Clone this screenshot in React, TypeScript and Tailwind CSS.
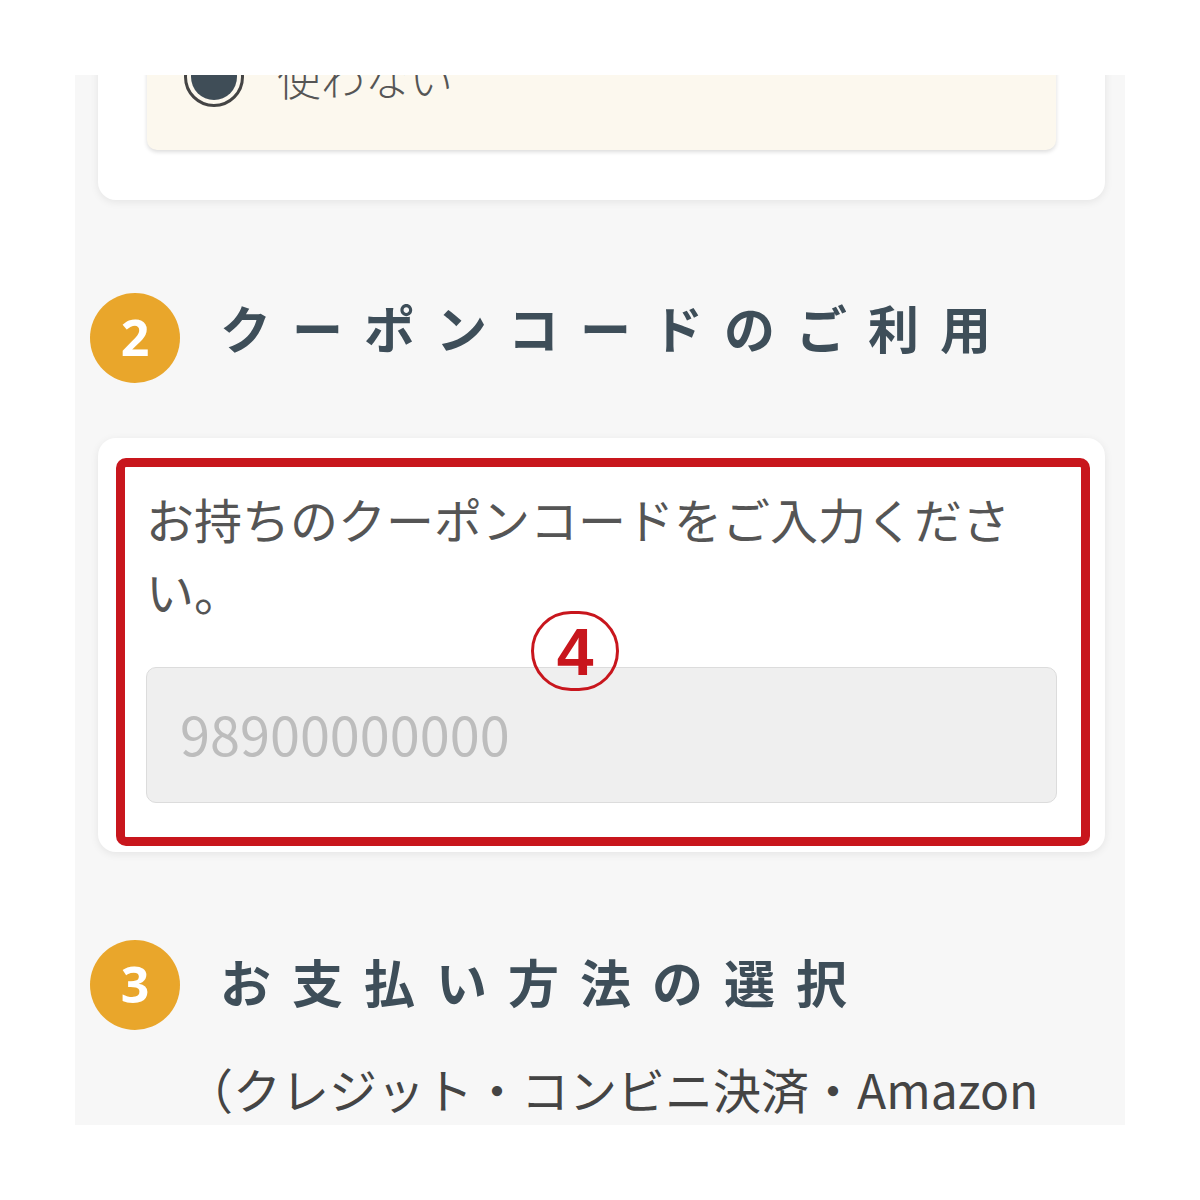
const jp = "font-['Noto_Sans_CJK_JP',sans-serif]";

function StepHeading({ num, title, lift }: { num: string; title: string; lift: string }) {
  return (
    <div className="flex items-center pl-[15px]">
      <div className="w-[90px] h-[90px] rounded-full bg-[#e9a62b] flex items-center justify-center shrink-0">
        <span className="text-white text-[50px] font-bold leading-none font-['Open_Sans',sans-serif] -mt-[2px]">
          {num}
        </span>
      </div>
      <h2 className={`${jp} ${lift} ml-[40px] text-[51px] font-bold leading-none tracking-[21px] text-[#3e4e59]`}>
        {title}
      </h2>
    </div>
  );
}

export default function App() {
  return (
    <div className="w-[1200px] h-[1200px] bg-white p-[75px]">
      <div className="w-[1050px] h-[1050px] bg-[#f7f7f7] overflow-hidden">
        {/* previous step card, cut off at the top */}
        <div className="ml-[23px] mr-[20px] -mt-[175px] bg-white rounded-[18px] shadow-[0_2px_8px_rgba(0,0,0,0.08)] pt-[50px] pb-[50px] px-[49px]">
          <div className="h-[200px] bg-[#fcf8ee] rounded-[10px] shadow-[0_2px_4px_rgba(0,0,0,0.14)] flex items-end pb-[40px] pl-[37px]">
            <div className="flex items-center">
              <div className="w-[60px] h-[60px] rounded-full border-[3px] border-[#444] p-[4px] shrink-0">
                <div className="w-full h-full rounded-full bg-[#3f4d57]" />
              </div>
              <span className={`${jp} ml-[33px] text-[44px] font-light text-[#555]`}>使わない</span>
            </div>
          </div>
        </div>

        <div className="mt-[93px]">
          <StepHeading num="2" title="クーポンコードのご利用" lift="-mt-[22px]" />
        </div>

        {/* coupon card */}
        <div className="relative ml-[23px] mr-[20px] mt-[55px] bg-white rounded-[18px] shadow-[0_2px_8px_rgba(0,0,0,0.08)] pt-[44px] pb-[49px] px-[48px]">
          <p className={`${jp} text-[48px] leading-[72px] text-[#555]`}>
            お持ちのクーポンコードをご入力ください。
          </p>
          <input
            readOnly
            placeholder="98900000000"
            className={`${jp} mt-[41px] w-full h-[136px] bg-[#efefef] border border-[#dcdcdc] rounded-[10px] pl-[33px] pb-[6px] text-[54px] placeholder:text-[#bdbdbd] outline-none`}
          />
          {/* annotation frame */}
          <div className="absolute left-[18px] top-[20px] right-[15px] bottom-[6px] border-[9px] border-[#c8161d] rounded-[10px] pointer-events-none" />
          <div className="absolute left-[433px] top-[173px] w-[88px] h-[80px] rounded-full border-[3px] border-[#c8161d] flex items-center justify-center">
            <span className="text-[#c8161d] text-[66px] font-bold leading-none font-['Liberation_Sans',sans-serif] mt-[2px]">4</span>
          </div>
        </div>

        <div className="mt-[88px]">
          <StepHeading num="3" title="お支払い方法の選択" lift="-mt-[8px]" />
        </div>
        <p className={`${jp} mt-[22px] pl-[110px] pr-[20px] text-[48px] leading-[72px] text-[#444]`}>
          （クレジット・コンビニ決済・Amazon Pay）
        </p>
      </div>
    </div>
  );
}
